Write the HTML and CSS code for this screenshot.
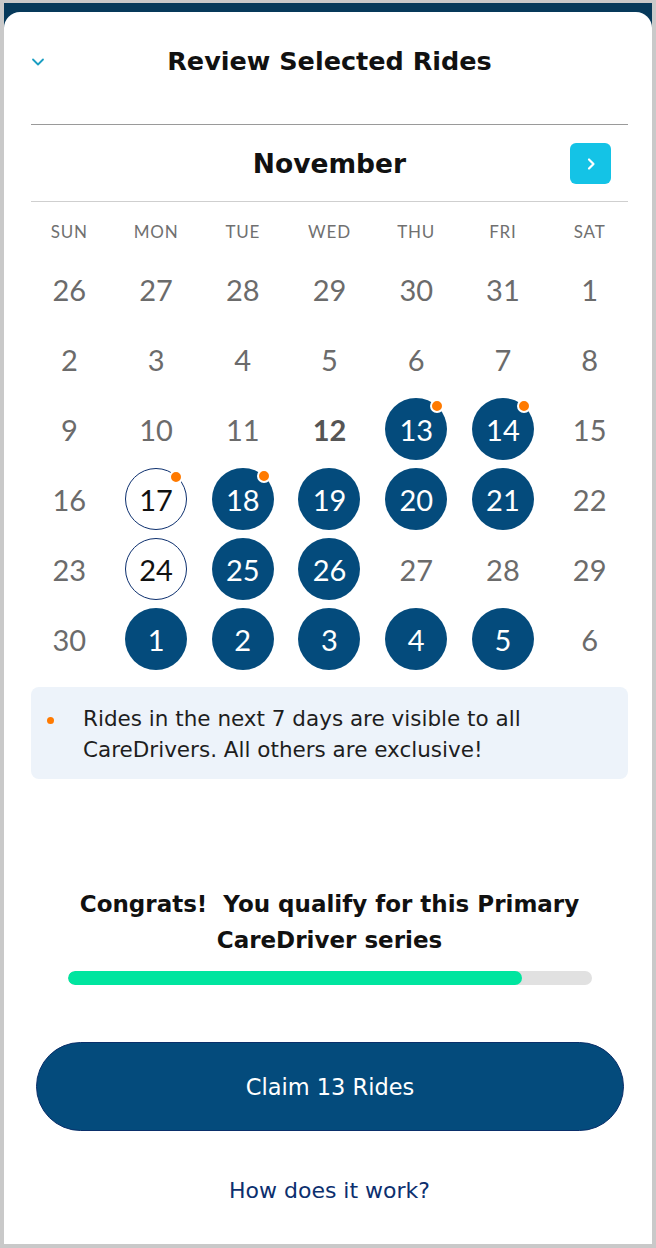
FILE: index.html
```html
<!DOCTYPE html>
<html lang="en">
<head>
<meta charset="UTF-8">
<meta name="viewport" content="width=device-width, initial-scale=1.0">
<title>Review Selected Rides</title>
<link rel="stylesheet" href="styles.css">
</head>
<body>
    <div class="screen">
        <div class="sheet">
            <div class="header">
                <button class="collapse" aria-label="Close">
                    <svg width="14" height="10" viewBox="0 0 14 10"><path d="M2 2.5 L7 7.5 L12 2.5" fill="none" stroke="currentColor" stroke-width="1.8" stroke-linecap="round" stroke-linejoin="round"/></svg>
                </button>
                <h1>Review Selected Rides</h1>
            </div>

            <!-- Calendar -->
            <div class="month-bar">
                <h2>November</h2>
                <button class="next" aria-label="Next month">
                    <svg width="12" height="14" viewBox="0 0 12 14"><path d="M4 2.5 L8.5 7 L4 11.5" fill="none" stroke="#fff" stroke-width="2.2" stroke-linecap="round" stroke-linejoin="round"/></svg>
                </button>
            </div>

            <div class="weekdays">
                <span>SUN</span><span>MON</span><span>TUE</span><span>WED</span><span>THU</span><span>FRI</span><span>SAT</span>
            </div>

            <div class="days">
                <div class="day"><span>26</span></div>
                <div class="day"><span>27</span></div>
                <div class="day"><span>28</span></div>
                <div class="day"><span>29</span></div>
                <div class="day"><span>30</span></div>
                <div class="day"><span>31</span></div>
                <div class="day"><span>1</span></div>

                <div class="day"><span>2</span></div>
                <div class="day"><span>3</span></div>
                <div class="day"><span>4</span></div>
                <div class="day"><span>5</span></div>
                <div class="day"><span>6</span></div>
                <div class="day"><span>7</span></div>
                <div class="day"><span>8</span></div>

                <div class="day"><span>9</span></div>
                <div class="day"><span>10</span></div>
                <div class="day"><span>11</span></div>
                <div class="day today"><span>12</span></div>
                <div class="day picked soon"><span>13</span></div>
                <div class="day picked soon"><span>14</span></div>
                <div class="day"><span>15</span></div>

                <div class="day"><span>16</span></div>
                <div class="day ringed soon"><span>17</span></div>
                <div class="day picked soon"><span>18</span></div>
                <div class="day picked"><span>19</span></div>
                <div class="day picked"><span>20</span></div>
                <div class="day picked"><span>21</span></div>
                <div class="day"><span>22</span></div>

                <div class="day"><span>23</span></div>
                <div class="day ringed"><span>24</span></div>
                <div class="day picked"><span>25</span></div>
                <div class="day picked"><span>26</span></div>
                <div class="day"><span>27</span></div>
                <div class="day"><span>28</span></div>
                <div class="day"><span>29</span></div>

                <div class="day"><span>30</span></div>
                <div class="day picked"><span>1</span></div>
                <div class="day picked"><span>2</span></div>
                <div class="day picked"><span>3</span></div>
                <div class="day picked"><span>4</span></div>
                <div class="day picked"><span>5</span></div>
                <div class="day"><span>6</span></div>
            </div>

            <div class="notice">
                <span class="bullet"></span>
                <p>Rides in the next 7 days are visible to all CareDrivers. All others are exclusive!</p>
            </div>

            <div class="qualify">
                <p>Congrats!&nbsp; You qualify for this Primary CareDriver series</p>
                <div class="progress"><div class="progress-fill" style="width: 86.7%"></div></div>
            </div>

            <button class="claim">Claim 13 Rides</button>
            <a href="#" class="how">How does it work?</a>
        </div>
    </div>
</body>
</html>
```

FILE: styles.css
```css
body {
    margin: 0;
    padding: 0;
    background-color: #c9c9c9;
    font-family: "DejaVu Sans", sans-serif;
    color: #111;
}
.screen {
    margin: 3px 4px 4px;
    padding-top: 9px;
    height: 1232px;
    background-color: #06395a;
    display: flex;
}
.sheet {
    flex: 1;
    background-color: #fff;
    border-radius: 16px 16px 0 0;
    padding: 0 24px 0 27px;
    display: flex;
    flex-direction: column;
}
.header {
    height: 113px;
    display: flex;
    align-items: center;
    justify-content: center;
    position: relative;
    border-bottom: 1.5px solid #9a9a9a;
    padding-bottom: 14px;
    box-sizing: border-box;
}
.collapse {
    position: absolute;
    left: 0;
    top: 45px;
    padding: 0;
    border: none;
    background: none;
    color: #1b9ec2;
    display: flex;
}
h1 {
    margin: 0;
    font-size: 25.5px;
    font-weight: 700;
}
.month-bar {
    height: 77px;
    display: flex;
    align-items: center;
    justify-content: center;
    position: relative;
    border-bottom: 1px solid #cfcfcf;
    box-sizing: border-box;
}
h2 {
    margin: 0;
    font-size: 26.5px;
    font-weight: 700;
}
.next {
    position: absolute;
    right: 17px;
    top: 18px;
    width: 41px;
    height: 41px;
    border: none;
    border-radius: 6px;
    background-color: #14c3e6;
    display: flex;
    align-items: center;
    justify-content: center;
    padding: 0;
}
.weekdays, .days {
    display: grid;
    grid-template-columns: repeat(7, 1fr);
    margin: 0 -5px 0 -5px;
    font-family: Lato, sans-serif;
}
.weekdays {
    padding: 20px 0 12px;
    line-height: 20px;
    font-size: 17px;
    letter-spacing: 0.8px;
    color: #707070;
    text-align: center;
}
.day {
    height: 70px;
    display: flex;
    align-items: center;
    justify-content: center;
}
.day span {
    width: 62px;
    height: 62px;
    box-sizing: border-box;
    border-radius: 50%;
    display: flex;
    align-items: center;
    justify-content: center;
    font-size: 29px;
    color: #6b6b6b;
    position: relative;
}
.day.today span {
    font-weight: 700;
    color: #555;
}
.day.ringed span {
    border: 1.5px solid #0c2f6e;
    color: #111;
}
.day.picked span {
    background-color: #044b7c;
    color: #fff;
}
/* orange marker for rides within the next week */
.day.soon span::after {
    content: "";
    position: absolute;
    top: 1px;
    right: 3px;
    width: 10px;
    height: 10px;
    border-radius: 50%;
    background-color: #ff7a00;
    border: 2px solid #fff;
}
.notice {
    margin-top: 13px;
    background-color: #edf3fa;
    border-radius: 8px;
    padding: 16px 40px 14px 52px;
    position: relative;
}
.notice .bullet {
    position: absolute;
    left: 16px;
    top: 30px;
    width: 7px;
    height: 7px;
    border-radius: 50%;
    background-color: #ff7a00;
}
.notice p {
    margin: 0;
    font-size: 21.5px;
    line-height: 31px;
    color: #1e1e1e;
}
.qualify {
    margin-top: 107px;
    text-align: center;
}
.qualify p {
    margin: 0 20px;
    font-size: 23px;
    font-weight: 700;
    line-height: 36px;
}
.progress {
    margin: 13px 36px 0 37px;
    height: 14px;
    border-radius: 7px;
    background-color: #e1e1e1;
    overflow: hidden;
}
.progress-fill {
    height: 100%;
    border-radius: 7px;
    background-color: #00e59f;
}
.claim {
    margin: 57px 4px 0 5px;
    height: 89px;
    border: 1px solid #0a2f6a;
    border-radius: 45px;
    background-color: #044b7c;
    color: #fff;
    font-family: "DejaVu Sans", sans-serif;
    font-size: 22.5px;
}
.how {
    margin-top: 45px;
    text-align: center;
    font-size: 22px;
    line-height: 30px;
    color: #0c2f6e;
    text-decoration: none;
}
```
